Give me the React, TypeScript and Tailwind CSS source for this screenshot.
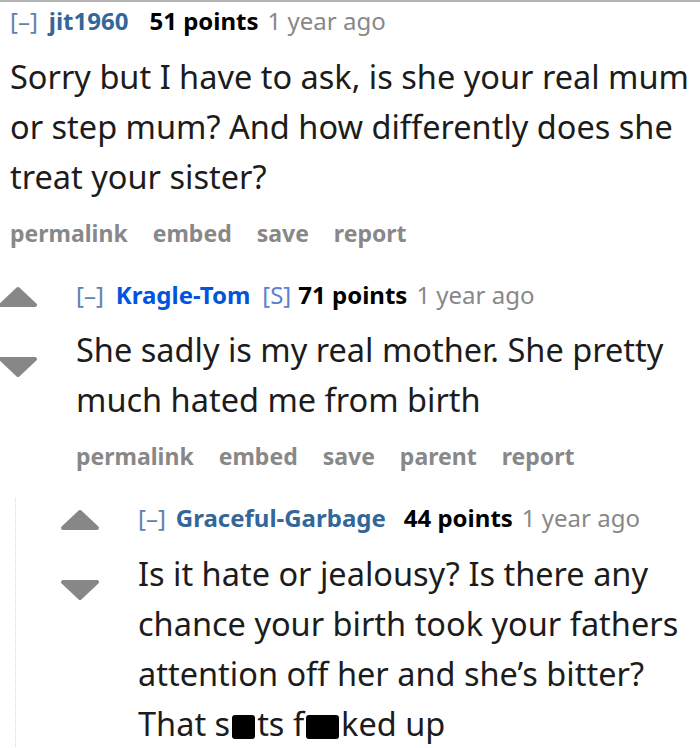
import React from 'react'

const font = { fontFamily: '"Noto Sans", "Open Sans", Arial, sans-serif' }

// triângulo de voto arredondado
const Arrow: React.FC<{ down?: boolean }> = ({ down }) => (
  <svg width="40" height="22" viewBox="0 0 40 22" className="block">
    <polygon
      points={down ? '3,3 37,3 20,19' : '20,3 37,19 3,19'}
      fill="#878787"
      stroke="#878787"
      strokeWidth="4"
      strokeLinejoin="round"
    />
  </svg>
)

const Votes: React.FC = () => (
  <div className="flex flex-col w-[40px] shrink-0 pt-[6px]">
    <Arrow />
    <div className="h-[48px]" />
    <Arrow down />
  </div>
)

const Buttons: React.FC<{ items: string[] }> = ({ items }) => (
  <div className="flex gap-[25px] mt-[16px] h-[30px] items-center text-[23px] font-bold text-[#888]">
    {items.map((b) => (
      <span key={b}>{b}</span>
    ))}
  </div>
)

const Censor: React.FC<{ w: number }> = ({ w }) => (
  <span
    className="inline-block h-[24px] mx-[2px] bg-black rounded-[3px] align-[-3px]"
    style={{ width: w }}
  />
)

export default function App() {
  return (
    <div className="w-[700px] h-[748px] overflow-hidden bg-white border-t-2 border-[#b4b4b4] text-[#1c1c1c]" style={font}>
      {/* comentário 1 */}
      <div className="pl-[10px] pt-[4px]">
        <div className="h-[30px] flex items-center text-[24px] whitespace-nowrap">
          <span className="text-[#5b83b0]">[–]</span>
          <span className="ml-[11px] font-bold text-[#336699]">jit1960</span>
          <span className="ml-[21px] font-bold text-black">51 points</span>
          <span className="ml-[9px] text-[#888]">1 year ago</span>
        </div>
        <div className="mt-[16px] text-[32.5px] leading-[50px] whitespace-nowrap">
          <div>Sorry but I have to ask, is she your real mum</div>
          <div>or step mum? And how differently does she</div>
          <div>treat your sister?</div>
        </div>
        <Buttons items={['permalink', 'embed', 'save', 'report']} />
      </div>

      {/* comentário 2 */}
      <div className="flex mt-[32px] ml-[-2px]">
        <Votes />
        <div className="ml-[38px]">
          <div className="h-[30px] flex items-center text-[24px] whitespace-nowrap">
            <span className="text-[#5b83b0]">[–]</span>
            <span className="ml-[12px] font-bold text-[#0055df]">Kragle-Tom</span>
            <span className="ml-[12px] text-[#5b83d0]">[S]</span>
            <span className="ml-[7px] font-bold text-black">71 points</span>
            <span className="ml-[9px] text-[#888]">1 year ago</span>
          </div>
          <div className="mt-[15px] text-[32.5px] leading-[50px] whitespace-nowrap">
            <div>She sadly is my real mother. She pretty</div>
            <div>much hated me from birth</div>
          </div>
          <Buttons items={['permalink', 'embed', 'save', 'parent', 'report']} />
        </div>
      </div>

      {/* comentário 3 (resposta aninhada) */}
      <div className="ml-[15px] mt-[27px] border-l border-dotted border-[#d4d4f4] pt-[5px] pl-[44px] flex">
        <Votes />
        <div className="ml-[38px]">
          <div className="h-[30px] flex items-center text-[24px] whitespace-nowrap">
            <span className="text-[#5b83b0]">[–]</span>
            <span className="ml-[10px] font-bold text-[#336699]">Graceful-Garbage</span>
            <span className="ml-[18px] font-bold text-black">44 points</span>
            <span className="ml-[9px] text-[#888]">1 year ago</span>
          </div>
          <div className="mt-[16px] text-[32.5px] leading-[50px] whitespace-nowrap">
            <div>Is it hate or jealousy? Is there any</div>
            <div>chance your birth took your fathers</div>
            <div>attention off her and she’s bitter?</div>
            <div>
              That s<Censor w={23} />ts f<Censor w={33} />ked up
            </div>
          </div>
        </div>
      </div>
    </div>
  )
}
